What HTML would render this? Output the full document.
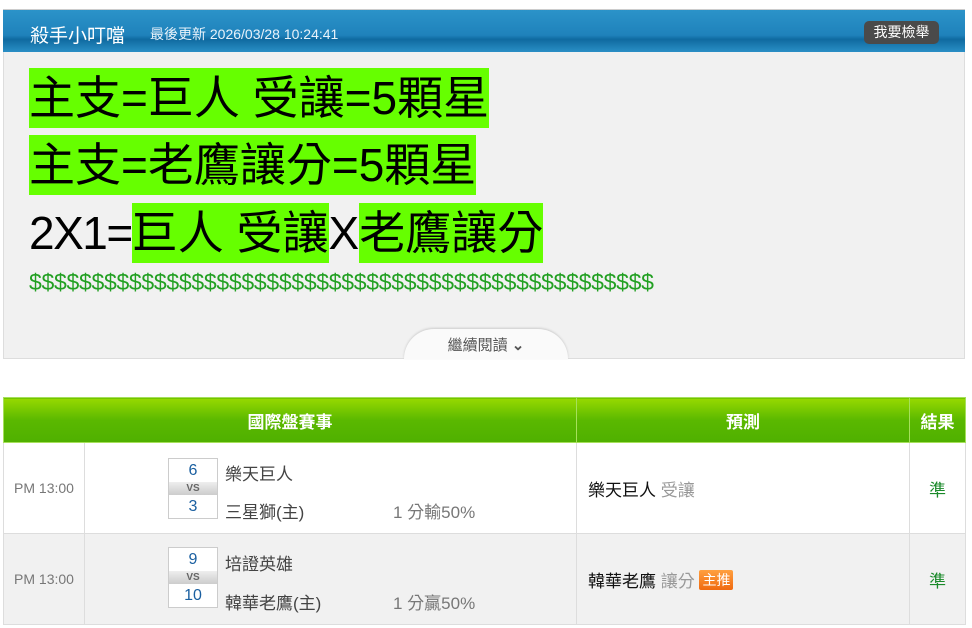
<!DOCTYPE html>
<html><head><meta charset="utf-8"><style>
*{margin:0;padding:0;box-sizing:border-box}
body{width:972px;height:628px;background:#fff;font-family:"Liberation Sans","Noto Sans CJK TC",sans-serif;position:relative;overflow:hidden}
.hdr{position:absolute;left:3px;top:9px;width:962px;height:43px;background:linear-gradient(#2b93c9,#1f82bb 60%,#0f6aa0 70%,#2a8fc6);border-top:1px solid #ccc}
.hdr .t{position:absolute;left:27px;top:11px;color:#fff;font-size:19px}
.hdr .d{position:absolute;left:147px;top:14px;color:#e8f2fa;font-size:14px}
.hdr .b{position:absolute;left:861px;top:11px;width:75px;height:23px;border-radius:5px;background:#4a4a4a;color:#fff;font-size:14px;text-align:center;line-height:23px}
.box{position:absolute;left:3px;top:52px;width:962px;height:307px;background:#f1f1f1;border:1px solid #ddd;border-top:none}
.ln{position:absolute;left:29px;font-size:46px;line-height:60px;height:60px;color:#000;white-space:nowrap}
.ln span{display:inline-block;height:60px;vertical-align:top}
.g{background:#66ff00}
.dl{position:absolute;left:29px;top:269px;font-size:23px;color:#22a022;letter-spacing:-0.3px;white-space:nowrap}
.more{position:absolute;left:404px;top:329px;width:164px;height:30px;background:#fafafa;border-radius:30px 30px 0 0;box-shadow:0 -1px 2px #ccc;text-align:center;font-size:15px;color:#555;line-height:34px}
table{position:absolute;left:3px;top:397px;width:962px;border-collapse:collapse;table-layout:fixed}
th{height:45px;background:linear-gradient(#97d900,#5ab800 50%,#4fb000);color:#fff;font-size:17px;border:1px solid #a6e05a;font-weight:bold}
td{height:91px;border:1px solid #ddd;font-size:16px;color:#555}
tr.r2 td{background:#f1f1f1}
.tm{font-size:14px;color:#777;text-align:center}
.m{position:relative}
.sc{position:absolute;left:83px;width:50px;border:1px solid #ccc;background:#fff;text-align:center;color:#1a5fa0}
.sc div{height:23px;line-height:23px;font-size:16px}
.sc .vs{height:13px;line-height:13px;font-size:10px;background:linear-gradient(#eee,#ccc);color:#666;font-weight:bold}
.n1{position:absolute;left:140px;font-size:17px;color:#444}
.od{position:absolute;left:308px;font-size:17px;color:#777}
.pr{padding-left:11px;font-size:17px;color:#111}
.pr span{color:#999}
.pr span.tag{display:inline-block;background:linear-gradient(#ffa040,#f06a10);color:#fff;font-size:14px;padding:0 3px;border-radius:2px;line-height:20px;vertical-align:2px}
.res{text-align:center;color:#1a8a2a;font-size:17px}
</style></head><body>
<div class="hdr"><span class="t">殺手小叮噹</span><span class="d">最後更新 2026/03/28 10:24:41</span><span class="b">我要檢舉</span></div>
<div class="box"></div>
<div class="ln" style="top:68px"><span class="g">主支=巨人 受讓=5顆星</span></div>
<div class="ln" style="top:135px"><span class="g">主支=老鷹讓分=5顆星</span></div>
<div class="ln" style="top:203px"><span style="letter-spacing:-1.5px">2X1=</span><span class="g">巨人 受讓</span><span>X</span><span class="g">老鷹讓分</span></div>
<div class="dl">$$$$$$$$$$$$$$$$$$$$$$$$$$$$$$$$$$$$$$$$$$$$$$$$$$</div>
<div class="more">繼續閱讀 <b>&#x2304;</b></div>
<table>
<colgroup><col style="width:81px"><col style="width:492px"><col style="width:333px"><col style="width:56px"></colgroup>
<tr><th colspan="2">國際盤賽事</th><th>預測</th><th>結果</th></tr>
<tr><td class="tm">PM 13:00</td><td class="m"><div class="sc" style="top:15px"><div>6</div><div class="vs">VS</div><div>3</div></div><span class="n1" style="top:17px">樂天巨人</span><span class="n1" style="top:55px">三星獅(主)</span><span class="od" style="top:55px">1 分輸50%</span></td><td class="pr">樂天巨人 <span>受讓</span></td><td class="res">準</td></tr>
<tr class="r2"><td class="tm">PM 13:00</td><td class="m"><div class="sc" style="top:13px"><div>9</div><div class="vs">VS</div><div>10</div></div><span class="n1" style="top:16px">培證英雄</span><span class="n1" style="top:55px">韓華老鷹(主)</span><span class="od" style="top:55px">1 分贏50%</span></td><td class="pr">韓華老鷹 <span>讓分</span> <span class="tag">主推</span></td><td class="res">準</td></tr>
</table>
</body></html>
